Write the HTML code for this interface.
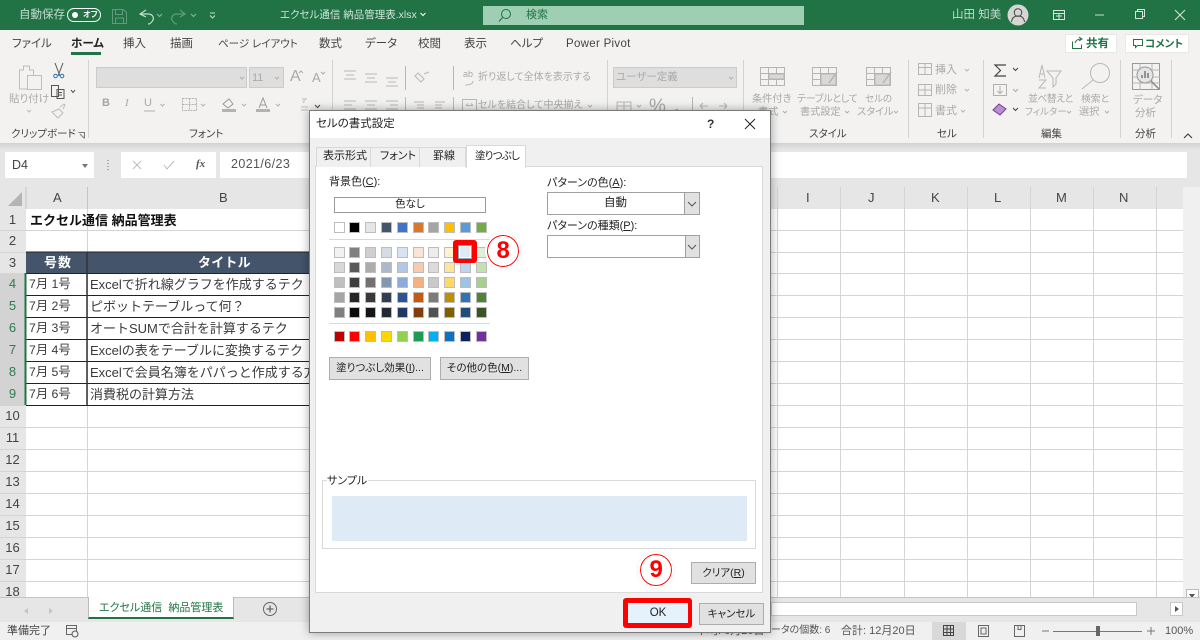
<!DOCTYPE html>
<html lang="ja"><head><meta charset="utf-8"><title>Excel</title>
<style>
*{box-sizing:border-box}
html,body{margin:0;padding:0}
body{width:1200px;height:640px;position:relative;overflow:hidden;background:#fff;font-family:"Liberation Sans","Noto Sans CJK JP",sans-serif;color:#333}
.a,.t{position:absolute}
.t{white-space:nowrap;line-height:1;font-size:11px;margin-top:1px;font-feature-settings:"palt"}
.dis{color:#a9a9a9}
.lbl{color:#444;font-size:11px}
.rh{position:absolute;left:0;width:25px;text-align:center;font-size:13px;color:#444;line-height:1}
.rh.s{color:#2f7a50}
.c{position:absolute;white-space:nowrap;font-size:13px;line-height:1;color:#3a3a3a;margin-top:1px}
.c.n{font-size:12.300px}
.ch{position:absolute;top:191px;font-size:13px;line-height:1;color:#444}
.btn{position:absolute;background:#e1e1e1;border:1px solid #adadad;text-align:center;font-size:10.500px;color:#222;white-space:nowrap;font-feature-settings:"palt"}
.sw{position:absolute;width:11px;height:11px;border:1px solid #bdbdbd}
u{text-underline-offset:1px}
</style></head><body>

<!-- title bar -->
<div class="a" style="left:0;top:0;width:1200px;height:30px;background:#217346"></div>
<div class="t" style="left:19px;top:9px;font-size:11.5px;color:#c5dccf">自動保存</div>
<div class="a" style="left:67px;top:8px;width:34px;height:14px;border:1px solid #fff;border-radius:7px"></div>
<div class="a" style="left:72px;top:12px;width:6px;height:6px;background:#fff;border-radius:50%"></div>
<div class="t" style="left:83px;top:10px;font-size:8px;color:#fff;font-weight:bold">オフ</div>
<div class="t" style="left:280px;top:9px;font-size:10.500px;color:#cfe2d7">エクセル通信 納品管理表.xlsx</div>
<div class="a" style="left:483px;top:6px;width:321px;height:19px;background:#9fcfb2"></div>
<div class="t" style="left:526px;top:9px;font-size:11px;color:#217346">検索</div>
<div class="t" style="left:952px;top:9px;font-size:11.5px;color:#c5dccf">山田 知美</div>
<svg class="a" style="left:0;top:0" width="1200" height="30" fill="none">
 <g stroke="#5f9c7c"><path d="M112.500 9.500h11l3 3v11h-14z M115.500 9.500v5h7v-5 M115.500 23v-5h8v5"/></g>
 <path d="M146 10l-6 4 6 3 M140 14h8c5 0 6 4 5 6s-3 4-5 4" stroke="#c5dccf" stroke-width="1.200"/>
 <path d="M157 14l2.500 2.500 2.500-2.500 M191 14l2.500 2.500 2.500-2.500" stroke="#8ab8a0"/>
 <path d="M180 10l5 4-5 3 M185 14h-8c-5 0-6 4-5 6s3 4 5 4" stroke="#5f9c7c" stroke-width="1.200"/>
 <path d="M210 13h5 M210 15.500l2.500 2.500 2.500-2.500" stroke="#c5dccf"/>
 <path d="M420.500 13l2.500 2.500 2.500-2.500" stroke="#fff"/>
 <circle cx="506" cy="14" r="4.500" stroke="#217346"/><path d="M502.500 17.500l-3.500 4" stroke="#217346"/>
 <circle cx="1018" cy="15" r="10.500" fill="#d6d6d2"/>
 <circle cx="1018" cy="12.500" r="3.800" stroke="#444"/><path d="M1011.500 22c.5-4.500 3-6 6.500-6s6 1.500 6.500 6" stroke="#444"/>
 <path d="M1053.500 10.500h11v9h-11z M1053.500 13.500h11 M1059 13.500v6 M1056 16h6" stroke="#d7e6dd"/>
 <path d="M1095 15h9" stroke="#c5dccf"/>
 <path d="M1135.500 11.500h7v7h-7z M1137.500 11.500v-2h7v7h-2" stroke="#d7e6dd"/>
 <path d="M1175 10l10 10 M1185 10l-10 10" stroke="#d7e6dd"/>
</svg>

<!-- ribbon -->
<div class="a" style="left:0;top:30px;width:1200px;height:113px;background:#f3f2f1"></div>
<div class="t lbl" style="left:12px;top:38px;font-size:11.5px">ファイル</div>
<div class="t" style="left:71px;top:38px;font-size:11.5px;font-weight:bold;color:#222">ホーム</div>
<div class="a" style="left:71px;top:52px;width:30px;height:2.500px;background:#217346"></div>
<div class="t lbl" style="left:123px;top:38px;font-size:11.5px">挿入</div>
<div class="t lbl" style="left:170px;top:38px;font-size:11.5px">描画</div>
<div class="t lbl" style="left:218px;top:38px;font-size:10.500px">ページ レイアウト</div>
<div class="t lbl" style="left:319px;top:38px;font-size:11.5px">数式</div>
<div class="t lbl" style="left:365px;top:38px;font-size:11.5px">データ</div>
<div class="t lbl" style="left:418px;top:38px;font-size:11.5px">校閲</div>
<div class="t lbl" style="left:464px;top:38px;font-size:11.5px">表示</div>
<div class="t lbl" style="left:510px;top:38px;font-size:11.5px">ヘルプ</div>
<div class="t lbl" style="left:566px;top:38px;font-size:11.500px;letter-spacing:.3px">Power Pivot</div>
<div class="a" style="left:1065px;top:34px;width:52px;height:19px;background:#fff;border:1px solid #e8e8e8"></div>
<div class="t" style="left:1086px;top:38px;font-size:11.500px;font-weight:bold;color:#217346">共有</div>
<div class="a" style="left:1125px;top:34px;width:64px;height:19px;background:#fff;border:1px solid #e8e8e8"></div>
<div class="t" style="left:1145px;top:38px;font-size:10.500px;font-weight:bold;color:#217346">コメント</div>

<div class="a" style="left:96px;top:67px;width:151px;height:21px;background:#dedede;border:1px solid #cbcbcb"></div>
<div class="a" style="left:249px;top:67px;width:35px;height:21px;background:#dedede;border:1px solid #cbcbcb"></div>
<div class="t dis" style="left:252px;top:72px;font-size:11px">11</div>
<div class="a" style="left:613px;top:67px;width:124px;height:21px;background:#dedede;border:1px solid #cbcbcb"></div>
<div class="t dis" style="left:616px;top:71px;font-size:10.500px">ユーザー定義</div>

<div class="t dis" style="left:9px;top:93px;font-size:10.500px">貼り付け</div>
<div class="t dis" style="left:290px;top:68px;font-size:16px">A</div>
<div class="t dis" style="left:312px;top:70px;font-size:13px">A</div>
<div class="t" style="left:102px;top:97px;font-size:11px;font-weight:bold;color:#a5a5a5">B</div>
<div class="t dis" style="left:125px;top:97px;font-size:11px;font-style:italic;font-family:'Liberation Serif',serif">I</div>
<div class="t dis" style="left:144px;top:97px;font-size:11px">U</div>
<div class="t dis" style="left:463px;top:69px;font-size:9px">ab</div>
<div class="t dis" style="left:478px;top:72px;font-size:10px">折り返して全体を表示する</div>
<div class="t dis" style="left:478px;top:100px;font-size:10px">セルを結合して中央揃え</div>
<div class="t dis" style="left:649px;top:96px;font-size:19px">%</div>
<div class="t dis" style="left:674px;top:96px;font-size:19px;font-weight:bold">,</div>
<div class="t dis" style="left:752px;top:94px;font-size:10.200px">条件付き</div>
<div class="t dis" style="left:758px;top:107px;font-size:10.200px">書式</div>
<div class="t dis" style="left:797px;top:94px;font-size:10px;letter-spacing:-.3px">テーブルとして</div>
<div class="t dis" style="left:800px;top:107px;font-size:10.200px">書式設定</div>
<div class="t dis" style="left:865px;top:94px;font-size:9.500px">セルの</div>
<div class="t dis" style="left:857px;top:107px;font-size:10.200px">スタイル</div>
<div class="t dis" style="left:935px;top:64px;font-size:11px">挿入</div>
<div class="t dis" style="left:935px;top:84px;font-size:11px">削除</div>
<div class="t dis" style="left:935px;top:105px;font-size:11px">書式</div>
<div class="t dis" style="left:1028px;top:94px;font-size:10px;letter-spacing:-.7px">並べ替えと</div>
<div class="t dis" style="left:1025px;top:107px;font-size:9.500px">フィルター</div>
<div class="t dis" style="left:1081px;top:94px;font-size:9.800px">検索と</div>
<div class="t dis" style="left:1079px;top:107px;font-size:10.200px">選択</div>
<div class="t dis" style="left:1133px;top:94px;font-size:10.500px">データ</div>
<div class="t dis" style="left:1135px;top:107px;font-size:10.500px">分析</div>

<div class="t lbl" style="left:11px;top:128px;font-size:10.500px">クリップボード</div>
<div class="t lbl" style="left:189px;top:128px;font-size:10.500px">フォント</div>
<div class="t lbl" style="left:809px;top:128px;font-size:10.500px">スタイル</div>
<div class="t lbl" style="left:937px;top:128px;font-size:10.500px">セル</div>
<div class="t lbl" style="left:1041px;top:128px;font-size:10.500px">編集</div>
<div class="t lbl" style="left:1135px;top:128px;font-size:10.500px">分析</div>

<svg class="a" style="left:0;top:30px" width="1200" height="113" viewBox="0 30 1200 113" fill="none">
 <g stroke="#d2d2d0" stroke-width="1">
  <path d="M88.500 60v78 M332.500 60v78 M607.500 60v78 M743.500 60v78 M908.500 60v78 M983.500 60v78 M1120.500 60v78 M1171.500 60v78"/>
 </g>
 <path d="M1072.500 41.500v7h9v-4 M1075 43c1-3 3-4 6-4 M1079 37l3 2-3 2" stroke="#217346"/>
 <path d="M1133.500 39.500h9v6h-5l-2 2v-2h-2z" stroke="#217346"/>
 <g stroke="#bdbdbd"><path d="M19.500 70h4v-4h6v4h4v19h-14z"/><path d="M27.500 75.500h14v14h-14z" fill="#f3f2f1"/></g>
 <path d="M55 63l5 13 M63 63l-5 13" stroke="#555"/><circle cx="55.500" cy="76" r="1.800" stroke="#2a6fb5"/><circle cx="62" cy="76" r="1.800" stroke="#2a6fb5"/>
 <path d="M51.500 85.500h5l2 0v11h-7z M57 89.500h7v9h-7z M59 92.500h3 M59 95h3" stroke="#555"/>
 <path d="M71 90l2 2.500 2-2.500" stroke="#444"/>
 <path d="M52 112l7-3 4 4-5 5z M60 107l4-3 1 1-2 4" stroke="#bdbdbd"/>
 <path d="M27 110l2 2 2-2" stroke="#bbb"/>
 <path d="M78.500 132.500h6v6 M80 134l4 4" stroke="#777"/>
 <g stroke="#b0b0b0"><path d="M240 77l2 2 2-2 M275 77l2 2 2-2 M160.500 104l2 2 2-2 M201 104l2 2 2-2 M242 104l2 2 2-2 M276 104l2 2 2-2 M729 77l2 2 2-2 M588 105l2 2 2-2 M637 105l2 2 2-2 M783 111l2 2 2-2 M845 111l2 2 2-2 M894 111l2 2 2-2 M1067 111l2 2 2-2 M1105 111l2 2 2-2"/>
  <path d="M182.500 98.500h14v12h-14z M189.500 98.500v12 M182.500 104.500h14" stroke-dasharray="2 1"/>
  <path d="M144 111h11"/>
 </g>
 <path d="M223 104l6-5 4 5-5 4z" stroke="#999"/><rect x="222" y="109" width="14" height="3" fill="#b5b3ad"/>
 <path d="M259 108l4-10 4 10 M260.500 105h5" stroke="#999"/><rect x="256" y="109" width="14" height="3" fill="#b5b3ad"/>
 <path d="M302 99h5 M304.500 99l-1 4 M301 107h7 M301 110h7" stroke="#bbb"/>
 <path d="M315 105l2.500 2.500 2.500-2.500" stroke="#444"/>
 <path d="M299 73l2 -2 2 2 M321 72l2 2 2-2" stroke="#aaa"/>
 <g stroke="#b8b8b8">
  <path d="M344 71h12 M346 75h8 M344 79h12 M365 74h12 M367 78h8 M365 82h12 M386 78h12 M388 82h8 M386 86h12"/>
  <path d="M344 101h12 M344 105h8 M344 109h12 M365 101h12 M367 105h8 M365 109h12 M386 101h12 M390 105h8 M386 109h12"/>
  <path d="M414 102h10 M417 105h7 M417 108h7 M414 111h10 M435 102h10 M435 105h7 M435 108h7 M435 111h10"/>
  <path d="M418 73l6 6-3 3-6-6z M424 74l5-2 M405.500 66v24 M405.500 97v14"/>
  <path d="M453.500 66v24 M453.500 97v14"/>
  <path d="M465 85c5 0 8-1 8-4" />
  <path d="M462.500 99.500h14v12h-14z M466 105.500h7 M466 105.500l2-2 M473 105.500l-2-2"/>
 </g>
 <g stroke="#b8b8b8">
  <path d="M617 102h14v10h-14z M617 106h14 M624 102v10"/>
  <path d="M692.500 97v14"/>
  <path d="M700 106h8 M700 106l3-3 M700 106l3 3 M727 106h-8 M727 106l-3-3 M727 106l-3 3"/>
 </g>
 <g stroke="#b5b5b5">
  <path d="M760.500 67.500h24v18h-24z M760.500 73.500h24 M760.500 79.500h24 M768.500 67.500v18 M776.500 67.500v18"/>
  <rect x="769" y="74" width="15" height="5" fill="#d8d8d8"/>
  <path d="M812.500 67.500h24v18h-24z M812.500 73.500h24 M812.500 79.500h24 M820.500 67.500v18 M828.500 67.500v18"/>
  <rect x="821" y="74" width="15" height="11" fill="#d8d8d8"/>
  <path d="M866.500 67.500h24v18h-24z M866.500 73.500h24 M866.500 79.500h24 M874.500 67.500v18 M882.500 67.500v18"/>
  <rect x="875" y="74" width="15" height="11" fill="#d8d8d8"/>
  <path d="M837 72l-8 11 M891 72l-8 11" stroke-width="1.500"/>
  <path d="M918.500 63.500h13v11h-13z M918.500 67.500h13 M925 63.500v11 M918.500 84.500h13v11h-13z M918.500 90h13 M925 84.500v11 M918.500 103.500h13v13h-13z M918.500 108h13 M925 103.500v13"/>
  <path d="M965 69l2 2 2-2 M965 89l2 2 2-2 M961 110l2 2 2-2"/>
 </g>
 <path d="M1006 65h-11l5.500 5.500-5.500 5.500h11" stroke="#444" stroke-width="1.200"/>
 <path d="M1013 68l2.500 2.500 2.500-2.500 M1013 108l2.500 2.500 2.500-2.500" stroke="#444"/>
 <path d="M993.500 84.500h13v11h-13z M1000 86v7 M997.500 91l2.500 2.500 2.500-2.500" stroke="#b0b0b0"/>
 <path d="M1013 89l2.500 2.500 2.500-2.500" stroke="#aaa"/>
 <path d="M993 110l6-6 7 5-6 6z" stroke="#7a3b96" fill="#b98fcf"/>
 <g stroke="#b8b8b8">
  <path d="M1039 78l3-13 3 13 M1040 74h4 M1039 80h7l-7 8h7 M1047 71h14l-5 7v6l-3 3v-9z"/>
  <circle cx="1100" cy="73" r="9.500"/><path d="M1093 80l-11 9"/>
  <path d="M1132.500 63.500h27v26h-27z" stroke="#999"/><path d="M1132.500 70h27 M1132.500 77h27 M1132.500 83h27 M1140 63.500v26 M1152 63.500v26"/>
  <circle cx="1145" cy="75" r="8" fill="#e4e4e4" stroke="#999"/><path d="M1151 81l8 8" stroke="#888" stroke-width="1.500"/>
  <path d="M1142 78v-3 M1145 78v-7 M1148 78v-5" stroke="#777" stroke-width="1.500"/>
 </g>
 <path d="M1184 138l4-4 4 4" stroke="#333"/>
</svg>
<div class="a" style="left:0;top:143px;width:1200px;height:7px;background:linear-gradient(#d2d2d2,#e6e6e6)"></div>

<!-- formula bar -->
<div class="a" style="left:0;top:150px;width:1200px;height:37px;background:#e6e6e6"></div>
<div class="a" style="left:5px;top:152px;width:89px;height:26px;background:#fff"></div>
<div class="t" style="left:12px;top:158px;font-size:12.500px;color:#444">D4</div>
<div class="a" style="left:82px;top:164px;border:3.500px solid transparent;border-top:4px solid #777"></div>
<div class="a" style="left:107px;top:160px;width:2px;height:10px;background-image:linear-gradient(#aaa 1px,transparent 1px);background-size:2px 3px"></div>
<div class="a" style="left:121px;top:152px;width:95px;height:26px;background:#fff"></div>
<div class="a" style="left:220px;top:152px;width:967px;height:26px;background:#fff"></div>
<div class="t" style="left:231px;top:157px;font-size:12.500px;color:#555;letter-spacing:.4px">2021/6/23</div>
<div class="t" style="left:196px;top:158px;font-size:11px;font-style:italic;font-weight:bold;font-family:'Liberation Serif',serif;color:#555">fx</div>
<svg class="a" style="left:130px;top:155px" width="50" height="20" fill="none"><path d="M3 6l8 8 M11 6l-8 8" stroke="#bbb"/><path d="M34 10l3 4 7-8" stroke="#bbb"/></svg>

<!-- sheet -->
<div class="a" style="left:0;top:187px;width:1200px;height:22px;background:#e6e6e6"></div>
<div class="a" style="left:0;top:209px;width:26px;height:388px;background:#e6e6e6"></div>
<div class="a" style="left:0;top:273px;width:25px;height:132px;background:#d3d3d3"></div>
<div class="a" style="left:26px;top:209px;width:1157px;height:388px;background:#fff"></div>
<svg class="a" style="left:0;top:187px" width="1200" height="420" viewBox="0 187 1200 420" fill="none">
 <path d="M8 206L22 192V206z" fill="#b4b4b4"/>
 <g stroke="#d4d4d4">
  <path d="M0 230.500H1183 M0 252.500H1183 M0 273.500H26 M0 295.500H26 M0 317.500H26 M0 339.500H26 M0 361.500H26 M0 383.500H26 M0 405.500H1183 M0 427.500H1183 M0 449.500H1183 M0 471.500H1183 M0 493.500H1183 M0 515.500H1183 M0 537.500H1183 M0 559.500H1183 M0 581.500H1183"/>
  <path d="M310 273.500H1183 M310 295.500H1183 M310 317.500H1183 M310 339.500H1183 M310 361.500H1183 M310 383.500H1183"/>
  <path d="M87.500 209V597 M777.500 187V597 M840.500 187V597 M904.500 187V597 M967.500 187V597 M1030.500 187V597 M1093.500 187V597 M1156.500 187V597"/>
  <path d="M26 187V209 M87.500 187V209" stroke="#c4c4c4"/>
 </g>
 <rect x="26" y="252" width="284" height="21" fill="#44546a"/>
 <g stroke="#222"><path d="M26 273.500H310 M26 295.500H310 M26 317.500H310 M26 339.500H310 M26 361.500H310 M26 383.500H310 M26 405.500H310 M26 252H310"/><path d="M87 252V405" stroke="#333" stroke-width="1.500"/></g>
 <path d="M25.500 273V405" stroke="#217346" stroke-width="2"/>
</svg>
<div class="ch" style="left:53px">A</div><div class="ch" style="left:219px">B</div>
<div class="ch" style="left:806px">I</div><div class="ch" style="left:868px">J</div><div class="ch" style="left:931px">K</div><div class="ch" style="left:994px">L</div><div class="ch" style="left:1056px">M</div><div class="ch" style="left:1119px">N</div>
<div class="rh" style="top:213px">1</div><div class="rh" style="top:234px">2</div><div class="rh" style="top:256px">3</div>
<div class="rh s" style="top:277px">4</div><div class="rh s" style="top:299px">5</div><div class="rh s" style="top:321px">6</div><div class="rh s" style="top:343px">7</div><div class="rh s" style="top:365px">8</div><div class="rh s" style="top:387px">9</div>
<div class="rh" style="top:409px">10</div><div class="rh" style="top:431px">11</div><div class="rh" style="top:453px">12</div><div class="rh" style="top:475px">13</div><div class="rh" style="top:497px">14</div><div class="rh" style="top:519px">15</div><div class="rh" style="top:541px">16</div><div class="rh" style="top:563px">17</div><div class="rh" style="top:585px">18</div>
<div class="c" style="left:30px;top:213px;font-weight:bold;font-size:13px;color:#111">エクセル通信 納品管理表</div>
<div class="c" style="left:44px;top:255px;font-weight:bold;font-size:13px;color:#fff;letter-spacing:1px">号数</div>
<div class="c" style="left:198px;top:255px;font-weight:bold;font-size:13px;color:#fff;letter-spacing:.200px">タイトル</div>
<div class="c n" style="left:29px;top:277px">7月 1号</div><div class="c n" style="left:29px;top:299px">7月 2号</div><div class="c n" style="left:29px;top:321px">7月 3号</div><div class="c n" style="left:29px;top:343px">7月 4号</div><div class="c n" style="left:29px;top:365px">7月 5号</div><div class="c n" style="left:29px;top:387px">7月 6号</div>
<div class="c" style="left:90px;top:277px">Excelで折れ線グラフを作成するテク</div>
<div class="c" style="left:90px;top:299px">ピボットテーブルって何？</div>
<div class="c" style="left:90px;top:321px">オートSUMで合計を計算するテク</div>
<div class="c" style="left:90px;top:343px">Excelの表をテーブルに変換するテク</div>
<div class="c" style="left:90px;top:365px">Excelで会員名簿をパパっと作成する方</div>
<div class="c" style="left:90px;top:387px">消費税の計算方法</div>

<!-- scrollbars -->
<div class="a" style="left:1183px;top:187px;width:17px;height:416px;background:#f0f0f0"></div>
<div class="a" style="left:1186px;top:589px;width:13px;height:13px;background:#fff;border:1px solid #bbb"></div>
<div class="a" style="left:1189px;top:594px;border:3.500px solid transparent;border-top:4px solid #555"></div>
<div class="a" style="left:0;top:597px;width:1200px;height:25px;background:#e6e6e6;border-top:1px solid #c4c4c4"></div>
<div class="a" style="left:771px;top:602px;width:366px;height:14px;background:#fff;border:1px solid #c8c8c8"></div>
<div class="a" style="left:1170px;top:602px;width:13px;height:14px;background:#fff;border:1px solid #c8c8c8"></div>
<div class="a" style="left:1175px;top:606px;border:3.500px solid transparent;border-left:4px solid #555"></div>
<div class="a" style="left:88px;top:597px;width:146px;height:22px;background:#fff;border-left:1px solid #bbb;border-right:1px solid #bbb;border-bottom:2px solid #217346"></div>
<div class="t" style="left:99px;top:602px;font-size:11px;color:#217346">エクセル通信&nbsp; 納品管理表</div>
<svg class="a" style="left:0;top:597px" width="300" height="25" fill="none"><path d="M28 11l-4 3 4 3z M49 11l4 3-4 3z" fill="#c4c4c4"/><circle cx="270" cy="12" r="6.500" stroke="#666"/><path d="M266.500 12h7 M270 8.500v7" stroke="#666" stroke-width="1.300"/></svg>

<!-- status bar -->
<div class="a" style="left:0;top:622px;width:1200px;height:18px;background:#f0f0f0"></div>
<div class="t" style="left:7px;top:625px;font-size:11px;color:#444">準備完了</div>
<div class="t" style="left:696px;top:625px;font-size:11px;color:#555">平均: 6月26日</div>
<div class="t" style="left:771px;top:625px;font-size:10px;color:#555">ータの個数: 6</div>
<div class="t" style="left:841px;top:625px;font-size:11px;color:#555">合計: 12月20日</div>
<div class="t" style="left:1165px;top:625px;font-size:11px;color:#555">100%</div>
<div class="a" style="left:932px;top:622px;width:34px;height:18px;background:#d8d8d8"></div>
<svg class="a" style="left:0;top:622px" width="1200" height="18" fill="none">
 <path d="M66.500 3.500h10v9h-10z M66.500 6.500h10" stroke="#666"/><circle cx="75" cy="12" r="3" fill="#f0f0f0" stroke="#555"/>
 <path d="M943.500 3.500h10v10h-10z M943.500 7h10 M943.500 10.500h10 M947 3.500v10 M950.500 3.500v10" stroke="#444"/>
 <path d="M978.500 3.500h10v11h-10z M981 6h5v6h-5z" stroke="#666"/>
 <path d="M1014.500 3.500h10v11h-10z M1018 3.500v4h3v-4" stroke="#666"/>
 <path d="M1042 9h7 M1053 9.500h89 M1147 9h8 M1151 5v8" stroke="#777"/>
 <rect x="1096" y="4" width="4" height="10" fill="#666"/>
</svg>

<!-- dialog -->
<div class="a" style="left:309px;top:110px;width:462px;height:523px;background:#f0f0f0;border:1px solid #7a7a7a;box-shadow:0 0 9px rgba(0,0,0,.35)"></div>
<div class="a" style="left:310px;top:111px;width:460px;height:27px;background:#fff"></div>
<div class="t" style="left:316px;top:118px;font-size:11.500px;color:#222">セルの書式設定</div>
<div class="t" style="left:707px;top:117px;font-size:12px;font-weight:bold;color:#333">?</div>
<svg class="a" style="left:744px;top:118px" width="12" height="12" fill="none"><path d="M1 1l10 10 M11 1l-10 10" stroke="#222"/></svg>

<div class="a" style="left:315px;top:166px;width:448px;height:427px;background:#fff;border:1px solid #d9d9d9"></div>
<div class="a" style="left:316px;top:147px;width:55px;height:20px;border:1px solid #d9d9d9;border-bottom:0;background:#f0f0f0"></div>
<div class="a" style="left:371px;top:147px;width:49px;height:20px;border:1px solid #d9d9d9;border-bottom:0;border-left:0;background:#f0f0f0"></div>
<div class="a" style="left:420px;top:147px;width:46px;height:20px;border:1px solid #d9d9d9;border-bottom:0;border-left:0;background:#f0f0f0"></div>
<div class="a" style="left:466px;top:145px;width:60px;height:23px;border:1px solid #d9d9d9;border-bottom:0;background:#fff"></div>
<div class="t" style="left:323px;top:150px;font-size:11px;color:#222">表示形式</div>
<div class="t" style="left:380px;top:150px;font-size:11px;color:#222">フォント</div>
<div class="t" style="left:433px;top:150px;font-size:11px;color:#222">罫線</div>
<div class="t" style="left:475px;top:150px;font-size:10.500px;letter-spacing:-.8px;color:#222">塗りつぶし</div>

<div class="t" style="left:329px;top:176px;font-size:11px;color:#222">背景色(<u>C</u>):</div>
<div class="btn" style="left:334px;top:197px;width:152px;height:16px;line-height:13px;background:#fff;border-color:#9a9a9a">色なし</div>
<div class="a" style="left:329px;top:239px;width:161px;height:1px;background:#d9d9d9"></div>
<div class="a" style="left:329px;top:323px;width:161px;height:1px;background:#d9d9d9"></div>

<div class="sw" style="left:334px;top:222px;background:#ffffff"></div><div class="sw" style="left:349px;top:222px;background:#000000"></div><div class="sw" style="left:365px;top:222px;background:#e7e6e6"></div><div class="sw" style="left:381px;top:222px;background:#44546a"></div><div class="sw" style="left:397px;top:222px;background:#4472c4"></div><div class="sw" style="left:413px;top:222px;background:#d9772c"></div><div class="sw" style="left:428px;top:222px;background:#a5a5a5"></div><div class="sw" style="left:444px;top:222px;background:#ffc000"></div><div class="sw" style="left:460px;top:222px;background:#5b9bd5"></div><div class="sw" style="left:476px;top:222px;background:#70ad47"></div>

<div class="sw" style="left:334px;top:247px;background:#f2f2f2"></div><div class="sw" style="left:349px;top:247px;background:#7f7f7f"></div><div class="sw" style="left:365px;top:247px;background:#d0cece"></div><div class="sw" style="left:381px;top:247px;background:#d6dce4"></div><div class="sw" style="left:397px;top:247px;background:#d9e2f3"></div><div class="sw" style="left:413px;top:247px;background:#fbe4d5"></div><div class="sw" style="left:428px;top:247px;background:#ededed"></div><div class="sw" style="left:444px;top:247px;background:#fff2cc"></div><div class="sw" style="left:476px;top:247px;background:#e2efd9"></div>

<div class="sw" style="left:334px;top:262px;background:#d8d8d8"></div><div class="sw" style="left:349px;top:262px;background:#595959"></div><div class="sw" style="left:365px;top:262px;background:#aeabab"></div><div class="sw" style="left:381px;top:262px;background:#adb9ca"></div><div class="sw" style="left:397px;top:262px;background:#b4c6e7"></div><div class="sw" style="left:413px;top:262px;background:#f7cbac"></div><div class="sw" style="left:428px;top:262px;background:#dbdbdb"></div><div class="sw" style="left:444px;top:262px;background:#fee599"></div><div class="sw" style="left:460px;top:262px;background:#bdd6ee"></div><div class="sw" style="left:476px;top:262px;background:#c5e0b3"></div>

<div class="sw" style="left:334px;top:277px;background:#bfbfbf"></div><div class="sw" style="left:349px;top:277px;background:#3f3f3f"></div><div class="sw" style="left:365px;top:277px;background:#757070"></div><div class="sw" style="left:381px;top:277px;background:#8496b0"></div><div class="sw" style="left:397px;top:277px;background:#8eaadb"></div><div class="sw" style="left:413px;top:277px;background:#f4b183"></div><div class="sw" style="left:428px;top:277px;background:#c9c9c9"></div><div class="sw" style="left:444px;top:277px;background:#ffd965"></div><div class="sw" style="left:460px;top:277px;background:#9cc3e5"></div><div class="sw" style="left:476px;top:277px;background:#a8d08d"></div>

<div class="sw" style="left:334px;top:292px;background:#a5a5a5"></div><div class="sw" style="left:349px;top:292px;background:#262626"></div><div class="sw" style="left:365px;top:292px;background:#3a3838"></div><div class="sw" style="left:381px;top:292px;background:#323e4f"></div><div class="sw" style="left:397px;top:292px;background:#2f5496"></div><div class="sw" style="left:413px;top:292px;background:#c55a11"></div><div class="sw" style="left:428px;top:292px;background:#7b7b7b"></div><div class="sw" style="left:444px;top:292px;background:#bf8f00"></div><div class="sw" style="left:460px;top:292px;background:#2e75b5"></div><div class="sw" style="left:476px;top:292px;background:#538135"></div>

<div class="sw" style="left:334px;top:307px;background:#7f7f7f"></div><div class="sw" style="left:349px;top:307px;background:#0c0c0c"></div><div class="sw" style="left:365px;top:307px;background:#171616"></div><div class="sw" style="left:381px;top:307px;background:#222a35"></div><div class="sw" style="left:397px;top:307px;background:#1f3864"></div><div class="sw" style="left:413px;top:307px;background:#833c0b"></div><div class="sw" style="left:428px;top:307px;background:#525252"></div><div class="sw" style="left:444px;top:307px;background:#7f6000"></div><div class="sw" style="left:460px;top:307px;background:#1e4e79"></div><div class="sw" style="left:476px;top:307px;background:#375623"></div>

<div class="sw" style="left:334px;top:331px;background:#c00000"></div><div class="sw" style="left:349px;top:331px;background:#ff0000"></div><div class="sw" style="left:365px;top:331px;background:#ffc000"></div><div class="sw" style="left:381px;top:331px;background:#ffd700"></div><div class="sw" style="left:397px;top:331px;background:#92d050"></div><div class="sw" style="left:413px;top:331px;background:#1f9a55"></div><div class="sw" style="left:428px;top:331px;background:#00b0f0"></div><div class="sw" style="left:444px;top:331px;background:#0f70c0"></div><div class="sw" style="left:460px;top:331px;background:#0f2060"></div><div class="sw" style="left:476px;top:331px;background:#7030a0"></div>

<!-- highlight 8 -->
<div class="a" style="left:453px;top:240px;width:24px;height:23px;background:#ff0000;border-radius:3px"></div>
<div class="a" style="left:459px;top:246px;width:12px;height:12px;background:#deeaf6;border:1px solid #fff;outline:1px solid #8ea4b8"></div>
<div class="a" style="left:487px;top:235px;width:32px;height:32px;border-radius:50%;background:#fff;border:1.500px solid #ff0000;outline:2px solid #fff;box-shadow:0 0 5px rgba(0,0,0,.25)"></div>
<div class="t" style="left:496.500px;top:238px;font-size:24px;font-weight:bold;color:#ff0000">8</div>

<div class="btn" style="left:329px;top:357px;width:102px;height:23px;line-height:21px">塗りつぶし効果(<u>I</u>)...</div>
<div class="btn" style="left:440px;top:357px;width:89px;height:23px;line-height:21px">その他の色(<u>M</u>)...</div>

<div class="t" style="left:547px;top:177px;font-size:11px;color:#222">パターンの色(<u>A</u>):</div>
<div class="a" style="left:547px;top:192px;width:153px;height:23px;background:#fff;border:1px solid #a0a0a0"></div>
<div class="a" style="left:684px;top:193px;width:15px;height:21px;background:#e1e1e1;border-left:1px solid #a0a0a0"></div>
<div class="t" style="left:604px;top:197px;font-size:11.500px;color:#222">自動</div>
<div class="t" style="left:547px;top:220px;font-size:11px;color:#222">パターンの種類(<u>P</u>):</div>
<div class="a" style="left:547px;top:235px;width:153px;height:23px;background:#fff;border:1px solid #a0a0a0"></div>
<div class="a" style="left:685px;top:236px;width:14px;height:21px;background:#e1e1e1;border-left:1px solid #a0a0a0"></div>
<svg class="a" style="left:684px;top:192px" width="16" height="66" fill="none"><path d="M4 10l4 4 4-4 M4 53l4 4 4-4" stroke="#555"/></svg>

<div class="a" style="left:322px;top:480px;width:434px;height:69px;border:1px solid #d9d9d9"></div>
<div class="t" style="left:327px;top:475px;font-size:11px;color:#222;background:#fff;padding-right:1px">サンプル</div>
<div class="a" style="left:332px;top:496px;width:415px;height:45px;background:#deeaf6"></div>

<div class="btn" style="left:691px;top:562px;width:65px;height:22px;line-height:20px">クリア(<u>R</u>)</div>
<div class="btn" style="left:699px;top:603px;width:65px;height:22px;line-height:20px">キャンセル</div>
<div class="a" style="left:623px;top:598px;width:69px;height:30px;background:#ff0000;border-radius:3px"></div>
<div class="btn" style="left:628px;top:603px;width:60px;height:20px;line-height:18px;background:#e5f1fb;border-color:#e5f1fb;font-size:11.500px">OK</div>
<div class="a" style="left:640px;top:554px;width:32px;height:32px;border-radius:50%;background:#fff;border:1.500px solid #ff0000;outline:2px solid #fff;box-shadow:0 0 5px rgba(0,0,0,.25)"></div>
<div class="t" style="left:649.500px;top:557px;font-size:24px;font-weight:bold;color:#ff0000">9</div>
</body></html>
